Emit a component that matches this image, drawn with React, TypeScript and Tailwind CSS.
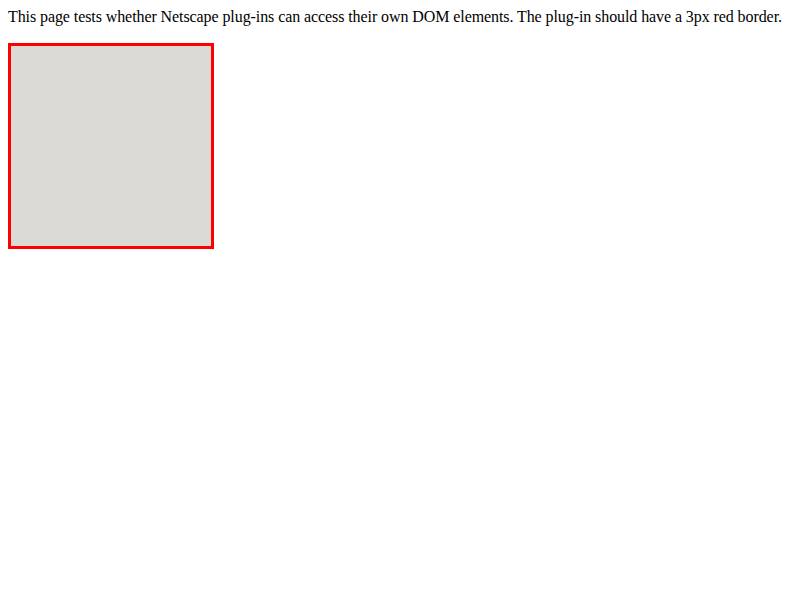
export default function App() {
  return (
    <div className="p-2 bg-white text-black text-[16px] font-['Liberation_Serif',serif] min-h-[600px]">
      <div className="leading-[18px] tracking-[-0.085px] whitespace-nowrap">
        This page tests whether Netscape plug-ins can access their own DOM elements. The plug-in should have a 3px red border.
      </div>
      <div className="mt-[17px] w-[206px] h-[206px] border-[3px] border-[#ff0000] bg-[#dcdad5]" />
    </div>
  );
}
